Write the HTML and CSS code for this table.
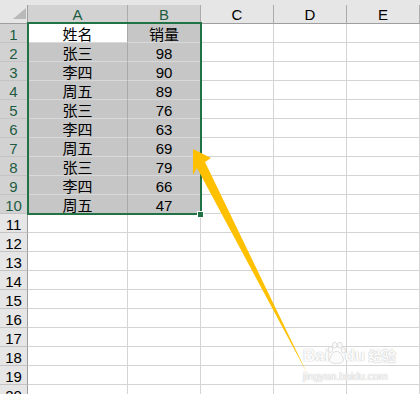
FILE: index.html
```html
<!DOCTYPE html>
<html lang="zh">
<head>
<meta charset="utf-8">
<title>Sheet</title>
<link rel="stylesheet" href="styles.css">
</head>
<body>
<div class="sheet">
  <div class="topbar"></div>
  <div class="grid">
    <div class="corner"></div>
    <div class="ch sel">A</div><div class="ch sel">B</div><div class="ch">C</div><div class="ch">D</div><div class="ch">E</div>

    <div class="rh sel">1</div><div class="c act">姓名</div><div class="c s">销量</div><div class="c"></div><div class="c"></div><div class="c"></div>
    <div class="rh sel">2</div><div class="c s sa">张三</div><div class="c s">98</div><div class="c"></div><div class="c"></div><div class="c"></div>
    <div class="rh sel">3</div><div class="c s sa">李四</div><div class="c s">90</div><div class="c"></div><div class="c"></div><div class="c"></div>
    <div class="rh sel">4</div><div class="c s sa">周五</div><div class="c s">89</div><div class="c"></div><div class="c"></div><div class="c"></div>
    <div class="rh sel">5</div><div class="c s sa">张三</div><div class="c s">76</div><div class="c"></div><div class="c"></div><div class="c"></div>
    <div class="rh sel">6</div><div class="c s sa">李四</div><div class="c s">63</div><div class="c"></div><div class="c"></div><div class="c"></div>
    <div class="rh sel">7</div><div class="c s sa">周五</div><div class="c s">69</div><div class="c"></div><div class="c"></div><div class="c"></div>
    <div class="rh sel">8</div><div class="c s sa">张三</div><div class="c s">79</div><div class="c"></div><div class="c"></div><div class="c"></div>
    <div class="rh sel">9</div><div class="c s sa">李四</div><div class="c s">66</div><div class="c"></div><div class="c"></div><div class="c"></div>
    <div class="rh sel">10</div><div class="c s sa">周五</div><div class="c s">47</div><div class="c"></div><div class="c"></div><div class="c"></div>
    <div class="rh">11</div><div class="c"></div><div class="c"></div><div class="c"></div><div class="c"></div><div class="c"></div>
    <div class="rh">12</div><div class="c"></div><div class="c"></div><div class="c"></div><div class="c"></div><div class="c"></div>
    <div class="rh">13</div><div class="c"></div><div class="c"></div><div class="c"></div><div class="c"></div><div class="c"></div>
    <div class="rh">14</div><div class="c"></div><div class="c"></div><div class="c"></div><div class="c"></div><div class="c"></div>
    <div class="rh">15</div><div class="c"></div><div class="c"></div><div class="c"></div><div class="c"></div><div class="c"></div>
    <div class="rh">16</div><div class="c"></div><div class="c"></div><div class="c"></div><div class="c"></div><div class="c"></div>
    <div class="rh">17</div><div class="c"></div><div class="c"></div><div class="c"></div><div class="c"></div><div class="c"></div>
    <div class="rh">18</div><div class="c"></div><div class="c"></div><div class="c"></div><div class="c"></div><div class="c"></div>
    <div class="rh">19</div><div class="c"></div><div class="c"></div><div class="c"></div><div class="c"></div><div class="c"></div>
    <div class="rh">20</div><div class="c"></div><div class="c"></div><div class="c"></div><div class="c"></div><div class="c"></div>
  </div>

  <div class="selection"><span class="handle"></span></div>

  <svg class="arrow" width="420" height="394" viewBox="0 0 420 394">
    <polygon points="193,149 211,158 205,162 307,373 197,168 193,175" fill="#ffc000"/>
  </svg>

  <div class="watermark">
    <div class="wm-logo">Bai<svg class="paw" width="19" height="24" viewBox="0 0 22 26"><g fill="#fbfbfb" stroke="#d6d6d6" stroke-width="1"><ellipse cx="4" cy="9" rx="2.6" ry="3.4"/><ellipse cx="9" cy="4" rx="2.6" ry="3.4"/><ellipse cx="15" cy="4" rx="2.6" ry="3.4"/><ellipse cx="19" cy="10" rx="2.4" ry="3.2"/><path d="M11 11c-4 0-8 6-8 10 0 3 3 4 8 4s8-1 8-4c0-4-4-10-8-10z"/></g></svg>du<span class="wm-cn">经验</span></div>
    <div class="wm-url">jingyan.baidu.com</div>
  </div>
</div>
</body>
</html>
```

FILE: styles.css
```css
html, body {
  margin: 0;
  padding: 0;
  background: #ffffff;
  overflow: hidden;
}

.sheet {
  position: relative;
  width: 420px;
  height: 394px;
  overflow: hidden;
  font-family: "Liberation Sans", "Noto Sans CJK SC", sans-serif;
  font-size: 15px;
  color: #000;
}

.topbar {
  height: 5px;
  background: #e6e6e6;
}

.grid {
  display: grid;
  grid-template-columns: 28px 100px 73px 73px 73px 73px;
  grid-auto-rows: 19px;
}

.grid > div {
  box-sizing: border-box;
  border-right: 1px solid #d4d4d4;
  border-bottom: 1px solid #d4d4d4;
  text-align: center;
  white-space: nowrap;
  overflow: hidden;
  padding-top: 3px;
  line-height: 15px;
}

.corner {
  background: #e6e6e6;
  display: flex;
  justify-content: flex-end;
  align-items: flex-end;
  padding: 0 1px 4px 0 !important;
  border-right-color: #a0a0a0 !important;
  border-bottom-color: #9e9e9e !important;
}

.corner::after {
  content: "";
  width: 13px;
  height: 11px;
  background: #b9b9b9;
  clip-path: polygon(100% 0, 100% 100%, 0 100%);
}

.ch {
  background: #e6e6e6;
  border-right-color: #ababab !important;
  border-bottom-color: #9e9e9e !important;
  padding-top: 2px !important;
}

.ch.sel {
  background: #d2d2d2;
  color: #1d5c42;
}

.rh {
  background: #e6e6e6;
  border-right-color: #9e9e9e !important;
  border-bottom-color: #c4c4c4 !important;
}

.rh.sel {
  background: #d2d2d2;
  color: #1d5c42;
}

.c.s {
  background: #c6c6c6;
  border-bottom-color: #d9d9d9;
}

.c.sa {
  border-right-color: #a9a9a9;
}

.c.act {
  background: #ffffff;
  border-right-color: #a9a9a9;
  border-bottom-color: #d9d9d9;
}

.selection {
  position: absolute;
  left: 27px;
  top: 22px;
  width: 175px;
  height: 193px;
  box-sizing: border-box;
  border: 2px solid #217346;
  pointer-events: none;
}

.handle {
  position: absolute;
  right: -4px;
  bottom: -5px;
  width: 5px;
  height: 5px;
  background: #217346;
  border: 1px solid #ffffff;
}

.arrow {
  position: absolute;
  left: 0;
  top: 0;
  pointer-events: none;
}

.watermark {
  position: absolute;
  left: 303px;
  top: 339px;
  white-space: nowrap;
  color: #fbfbfb;
  text-shadow: 0 0 1px #c4c4c4, 0 0 1px #c4c4c4;
  pointer-events: none;
}

.wm-logo {
  display: flex;
  align-items: flex-end;
  font-family: "Liberation Sans", sans-serif;
  font-weight: bold;
  font-size: 17px;
  line-height: 20px;
  height: 27px;
}

.paw {
  margin: 0 -2px 1px -2px;
}

.wm-cn {
  font-family: "Noto Sans CJK SC", sans-serif;
  font-size: 14px;
  font-weight: bold;
  margin-left: 3px;
  margin-bottom: 1px;
}

.wm-url {
  font-family: "Liberation Sans", sans-serif;
  font-size: 10.5px;
  line-height: 14px;
  margin-top: 3px;
}
```
